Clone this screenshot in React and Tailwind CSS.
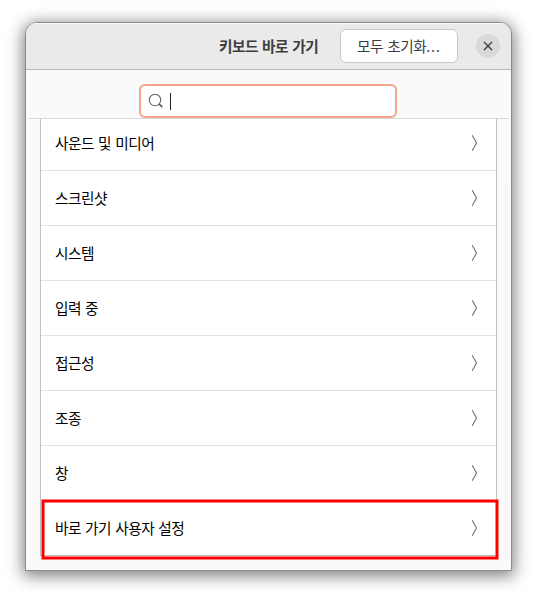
const rows = ['사운드 및 미디어', '스크린샷', '시스템', '입력 중', '접근성', '조종', '창', '바로 가기 사용자 설정'];

function Chevron() {
  return (
    <svg width="8" height="18" viewBox="0 0 8 18" fill="none" stroke="#707070" strokeWidth="1.1">
      <path d="M2.2 1.2 L6.5 9 L2.2 16.8" />
    </svg>
  );
}

export default function App() {
  return (
    <div className="h-[599px] w-[537px] overflow-hidden bg-white pt-[22px] pl-[25px] font-['Noto_Sans_CJK_KR',sans-serif] text-[14.67px] tracking-[-0.49px] [word-spacing:1.3px]">
      <div className="flex h-[549px] w-[487px] flex-col overflow-hidden rounded-t-[12px] border border-[#8b8b8b] bg-[#fafafa] shadow-[0_3px_16px_2px_rgba(0,0,0,0.5)]">
        <header className="flex h-[47px] shrink-0 items-center border-b border-[#bababa] bg-[#eaeaea] pl-[193px] shadow-[inset_0_1px_0_#fafafa]">
          <h1 className="w-[121px] leading-5 font-bold whitespace-nowrap text-[#3d3d3d]">키보드 바로 가기</h1>
          <button className="h-[34px] w-[118px] shrink-0 rounded-md border border-[#c8c8c8] bg-white leading-[30px] whitespace-nowrap text-[#3d3d3d] [word-spacing:1.3px]">
            모두 초기화<span className="font-['Noto_Sans'] tracking-[1px]">...</span>
          </button>
          <button className="ml-[18px] flex size-6 shrink-0 items-center justify-center rounded-full bg-[#d9d9d9]">
            <svg width="10" height="10" viewBox="0 0 10 10" stroke="#3d3d3d" strokeWidth="1.4">
              <path d="M1 1 L9 9 M9 1 L1 9" />
            </svg>
          </button>
        </header>
        <div className="mx-0.5 h-[49px] shrink-0 border-b border-[#dadada] pt-[14px] pl-[111px]">
          <div className="flex h-[34px] w-[258px] items-center rounded-[6px] border-2 border-[#f4a68c] bg-white pl-[7px]">
            <svg width="16" height="16" viewBox="0 0 16 16" fill="none" stroke="#666" strokeWidth="1.1">
              <circle cx="7" cy="7" r="5.7" />
              <path d="M11 11 L14.3 14" strokeWidth="1.7" />
            </svg>
            <span className="ml-[6px] h-[17px] w-px bg-[#222]" />
          </div>
        </div>
        <main className="flex min-h-0 flex-1">
          <ul className="ml-[14px] h-[437px] w-[457px] border-x border-b border-[#c0c0c0] bg-white">
            {rows.map((label, i) => (
              <li
                key={label}
                className={`relative flex items-center justify-between pr-[18px] pl-[14px] text-black ${i === 0 ? 'h-[52px] pb-[3px]' : 'h-[55px]'} ${i < 7 ? 'border-b border-[#e1e1e1]' : 'pb-px'}`}
              >
                <span className="leading-5 whitespace-nowrap">{label}</span>
                <Chevron />
                {i === 7 && (
                  <svg className="absolute -top-[2px] left-0" width="459" height="62" fill="none" stroke="#ff0000" strokeWidth="3">
                    <rect x="2" y="2" width="454" height="57" />
                  </svg>
                )}
              </li>
            ))}
          </ul>
          <div className="mt-[63px] ml-[8px] h-[381px] w-[3px] rounded-full bg-[#f5f5f5]" />
        </main>
      </div>
    </div>
  );
}
